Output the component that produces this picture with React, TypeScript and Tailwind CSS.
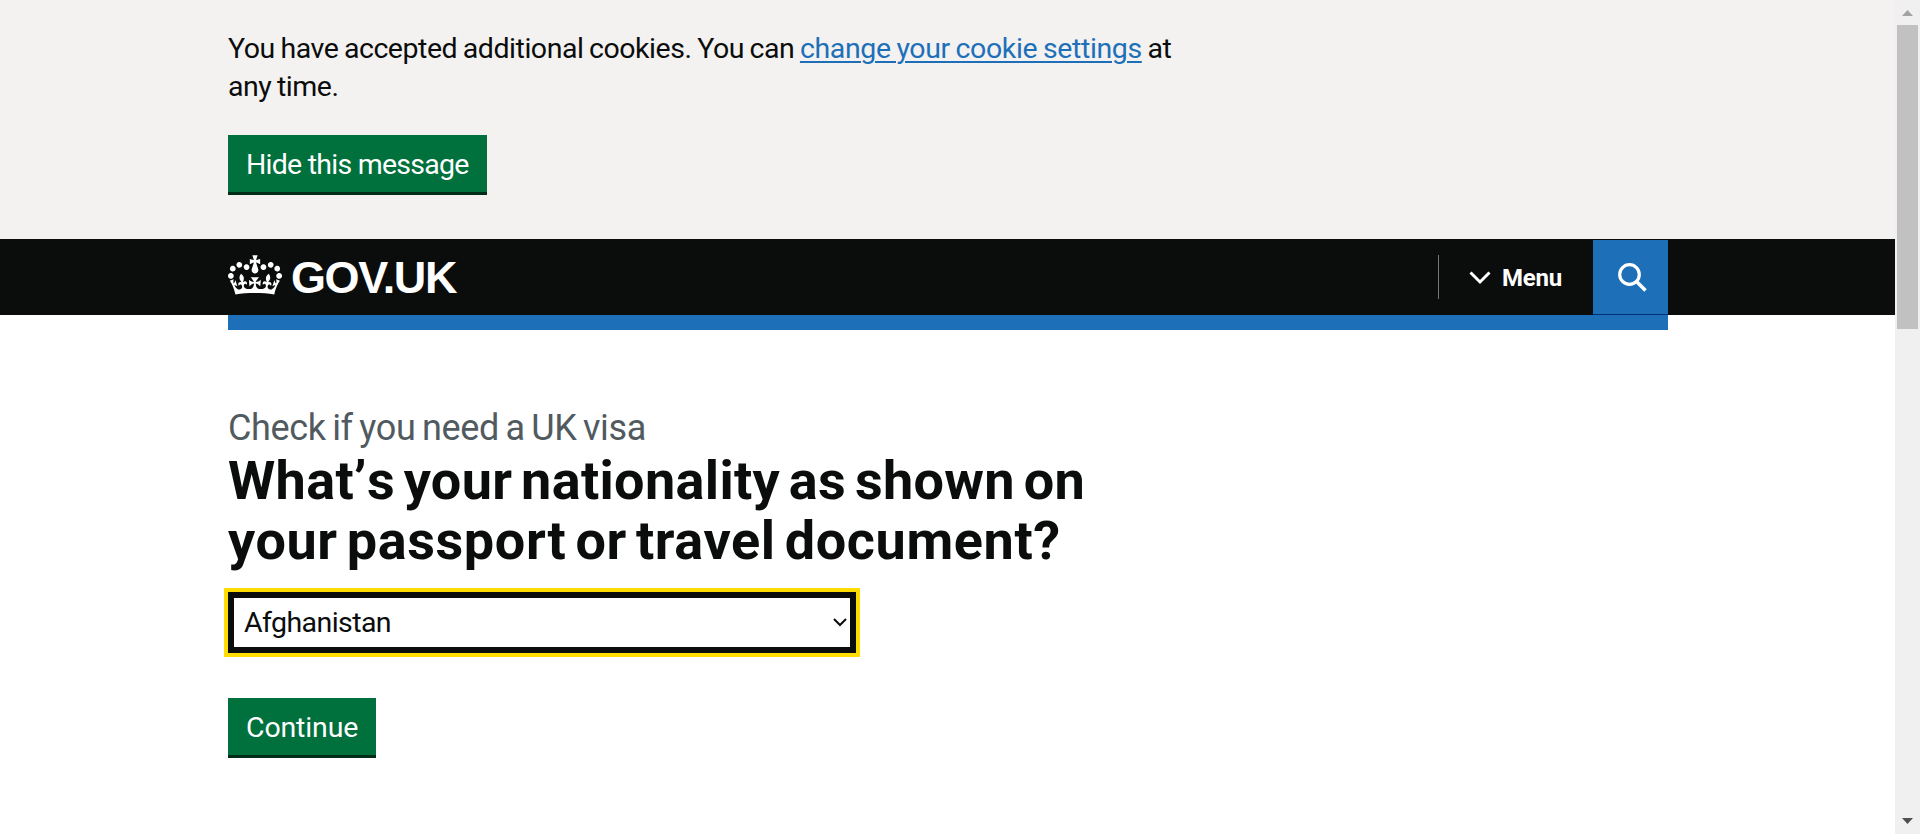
import type { ReactNode } from "react";

const CROWN =
  "M25 30.2c3.5 1.5 7.7-.2 9.1-3.7 1.5-3.6-.2-7.8-3.9-9.2-3.6-1.4-7.6.3-9.1 3.9-1.4 3.5.3 7.5 3.8 9zM9 39.5c3.6 1.5 7.8-.2 9.2-3.7 1.5-3.6-.2-7.8-3.9-9.1-3.6-1.5-7.6.2-9.1 3.8-1.4 3.5.3 7.5 3.8 9zM4.4 57.2c3.5 1.5 7.7-.2 9.1-3.8 1.5-3.6-.2-7.7-3.9-9.1-3.5-1.5-7.6.3-9.1 3.8-1.4 3.5.3 7.6 3.9 9.1zm38.3-21.4c3.5 1.5 7.7-.2 9.1-3.8 1.5-3.6-.2-7.7-3.9-9.1-3.6-1.5-7.6.3-9.1 3.8-1.3 3.6.4 7.7 3.9 9.1zm64.4-5.6c-3.6 1.5-7.8-.2-9.1-3.7-1.5-3.6.2-7.8 3.8-9.2 3.6-1.4 7.7.3 9.2 3.9 1.3 3.5-.4 7.5-3.9 9zm15.9 9.3c-3.6 1.5-7.7-.2-9.1-3.7-1.5-3.6.2-7.8 3.7-9.1 3.6-1.5 7.7.2 9.2 3.8 1.5 3.5-.3 7.5-3.8 9zm4.7 17.7c-3.6 1.5-7.8-.2-9.2-3.8-1.5-3.6.2-7.7 3.9-9.1 3.6-1.5 7.7.3 9.2 3.8 1.3 3.5-.4 7.6-3.9 9.1zM89.3 35.8c-3.6 1.5-7.8-.2-9.2-3.8-1.4-3.6.2-7.7 3.9-9.1 3.6-1.5 7.7.3 9.2 3.8 1.4 3.6-.3 7.7-3.9 9.1zM69.7 17.7l8.9 4.7V9.3l-8.9 2.8c-.2-.3-.5-.6-.9-.9L72.4 0H59.6l3.5 11.2c-.3.3-.6.5-.9.9l-8.8-2.8v13.1l8.8-4.7c.3.3.6.7.9.9l-5 15.4v.1c-.2.8-.4 1.6-.4 2.4 0 4.1 3.1 7.5 7 8.1h.2c.3 0 .7.1 1 .1.4 0 .7 0 1-.1h.2c4-.6 7.1-4.1 7.1-8.1 0-.8-.1-1.7-.4-2.4V34l-5.1-15.4c.4-.2.7-.6 1-.9zM66 92.8c16.9 0 32.8 1.1 47.1 3.2 4-16.9 8.9-26.7 14-33.5l-9.6-3.4c1 4.9 1.1 7.2 0 10.2-1.5-1.4-3-4.3-4.2-8.7L108.6 76c2.8-2 5-3.2 7.5-3.3-4.4 9.4-10 11.9-13.6 11.2-4.3-.8-6.3-4.6-5.6-7.9 1-4.7 5.7-5.9 8-.5 4.3-8.7-3-11.4-7.6-8.8 7.1-7.2 7.9-13.5 2.1-21.1-8 6.1-8.1 12.3-4.5 20.8-4.7-5.4-12.1-2.5-9.5 6.2 3.4-5.2 7.9-2 7.2 3.1-.6 4.3-6.4 7.8-13.5 7.2-10.3-.9-10.9-8-11.2-13.8 2.5-.5 7.1 1.8 11 7.3L80.2 60c-4.1 4.4-8 5.3-12.3 5.4 1.4-4.4 8-11.6 8-11.6H55.5s6.4 7.2 7.9 11.6c-4.2-.1-8-1-12.3-5.4l1.4 16.4c3.9-5.5 8.5-7.7 10.9-7.3-.3 5.8-.9 12.8-11.1 13.8-7.2.6-12.9-2.9-13.5-7.2-.7-5 3.8-8.3 7.1-3.1 2.7-8.7-4.6-11.6-9.4-6.2 3.7-8.5 3.6-14.7-4.6-20.8-5.8 7.6-5 13.9 2.2 21.1-4.7-2.6-11.9.1-7.7 8.8 2.3-5.5 7.1-4.2 8.1.5.7 3.3-1.3 7.1-5.7 7.9-3.5.7-9-1.8-13.5-11.2 2.5.1 4.7 1.3 7.5 3.3l-4.7-15.4c-1.2 4.4-2.7 7.2-4.3 8.7-1.1-3-.9-5.3 0-10.2l-9.5 3.4c5 6.9 9.9 16.7 14 33.5 14.8-2.1 30.8-3.2 47.7-3.2z";

function Button({ className, children }: { className: string; children: ReactNode }) {
  return (
    <button
      className={`block h-[57px] bg-[#00703c] pt-[2px] pl-[18px] text-left text-[28.5px] leading-[55px] whitespace-nowrap text-white shadow-[0_3px_0_#002d18] ${className}`}
    >
      {children}
    </button>
  );
}

function CookieBanner() {
  return (
    <section className="h-[239px] bg-[#f3f2f1] pt-[30px] pl-[228px]">
      <p className="w-[960px] text-[28.5px] leading-[37.5px] tracking-[-0.46px] [word-spacing:-1px]">
        You have accepted additional cookies. You can{" "}
        <a
          href="#"
          className="tracking-[-0.37px] text-[#1d70b8] underline decoration-2 underline-offset-[3px]"
        >
          change your cookie settings
        </a>{" "}
        at
        <br />
        any time.
      </p>
      <Button className="mt-[30px] w-[259px] tracking-[-0.75px]">Hide this message</Button>
    </section>
  );
}

function Header() {
  return (
    <header>
      <div className="flex h-[76px] items-start bg-[#0b0c0c] pr-[227px] pl-[228px] text-white">
        <a href="#" className="mt-4 flex items-start">
          <svg width="54" height="40" viewBox="0 0 132 97" fill="currentColor">
            <path d={CROWN} />
          </svg>
          <span className="mt-[1px] ml-[9px] font-['Liberation_Sans',sans-serif] text-[45px] leading-[44px] font-bold tracking-[-1.4px]">
            GOV.UK
          </span>
        </a>
        <nav className="ml-auto flex items-start">
          <button className="mt-4 flex h-[44px] items-center border-l border-[#6f777b] pl-[30px]">
            <svg className="mt-px" width="22" height="14" viewBox="0 0 22 14" fill="none" stroke="currentColor" strokeWidth="3">
              <path d="M1.5 1.5 11 11l9.5-9.5" />
            </svg>
            <span className="mt-[2px] ml-[11px] w-[91px] text-left text-[24px] leading-[44px] font-bold tracking-[-0.2px]">Menu</span>
          </button>
          <button className="mt-px flex h-[75px] w-[75px] items-start border-b border-[#003078] bg-[#1d70b8] pt-[22px] pl-[25px]">
            <svg width="30" height="31" viewBox="0 0 30 31" fill="none" stroke="currentColor">
              <circle cx="11.5" cy="12.5" r="9.8" strokeWidth="3.2" />
              <path d="m18.5 19.5 9 9" strokeWidth="3.6" />
            </svg>
          </button>
        </nav>
      </div>
      <div className="mr-[227px] ml-[228px] h-[15px] bg-[#1d70b8]" />
    </header>
  );
}

function Question() {
  return (
    <main className="pt-[76px] pl-[228px]">
      <p className="text-[36px] leading-[45px] tracking-[-0.36px] text-[#505a5f] [word-spacing:-2px]">
        Check if you need a UK visa
      </p>
      <h1 className="text-[54px] leading-[60px] font-bold tracking-[0.33px] [word-spacing:-5px]">
        What<span className="tracking-[0.5px]">’</span>s your nationality as shown on
        <br />
        <span className="tracking-[0.6px]">your passport or travel document?</span>
      </h1>
      <div className="mt-[21px] flex h-[61px] w-[628px] items-center justify-between border-[6px] border-[#0b0c0c] bg-white pr-[3px] pl-[10px] outline-4 outline-[#ffdd00]">
        <span className="text-[28.5px] leading-[49px] tracking-[-0.57px]">Afghanistan</span>
        <svg width="14" height="9" viewBox="0 0 14 9" fill="none" stroke="#0b0c0c" strokeWidth="2">
          <path d="m1 1 6 6 6-6" />
        </svg>
      </div>
      <Button className="mt-[45px] w-[148px] tracking-[-0.15px]">Continue</Button>
    </main>
  );
}

function Scrollbar() {
  return (
    <div className="flex w-[25px] flex-col items-center justify-between bg-[#f0f0f0]">
      <div className="flex flex-col items-center">
        <svg className="mt-[10px]" width="11" height="6" viewBox="0 0 11 6" fill="#a3a3a3">
          <path d="M0 6 5.5 0 11 6z" />
        </svg>
        <div className="mt-[9px] h-[304px] w-[21px] bg-[#c1c1c1]" />
      </div>
      <svg className="mb-[10px]" width="11" height="6" viewBox="0 0 11 6" fill="#505050">
        <path d="M0 0h11L5.5 6z" />
      </svg>
    </div>
  );
}

export default function App() {
  return (
    <div className="flex h-[834px] w-[1920px] overflow-hidden bg-white font-['Roboto',sans-serif] text-[#0b0c0c]">
      <div className="w-[1895px]">
        <CookieBanner />
        <Header />
        <Question />
      </div>
      <Scrollbar />
    </div>
  );
}
